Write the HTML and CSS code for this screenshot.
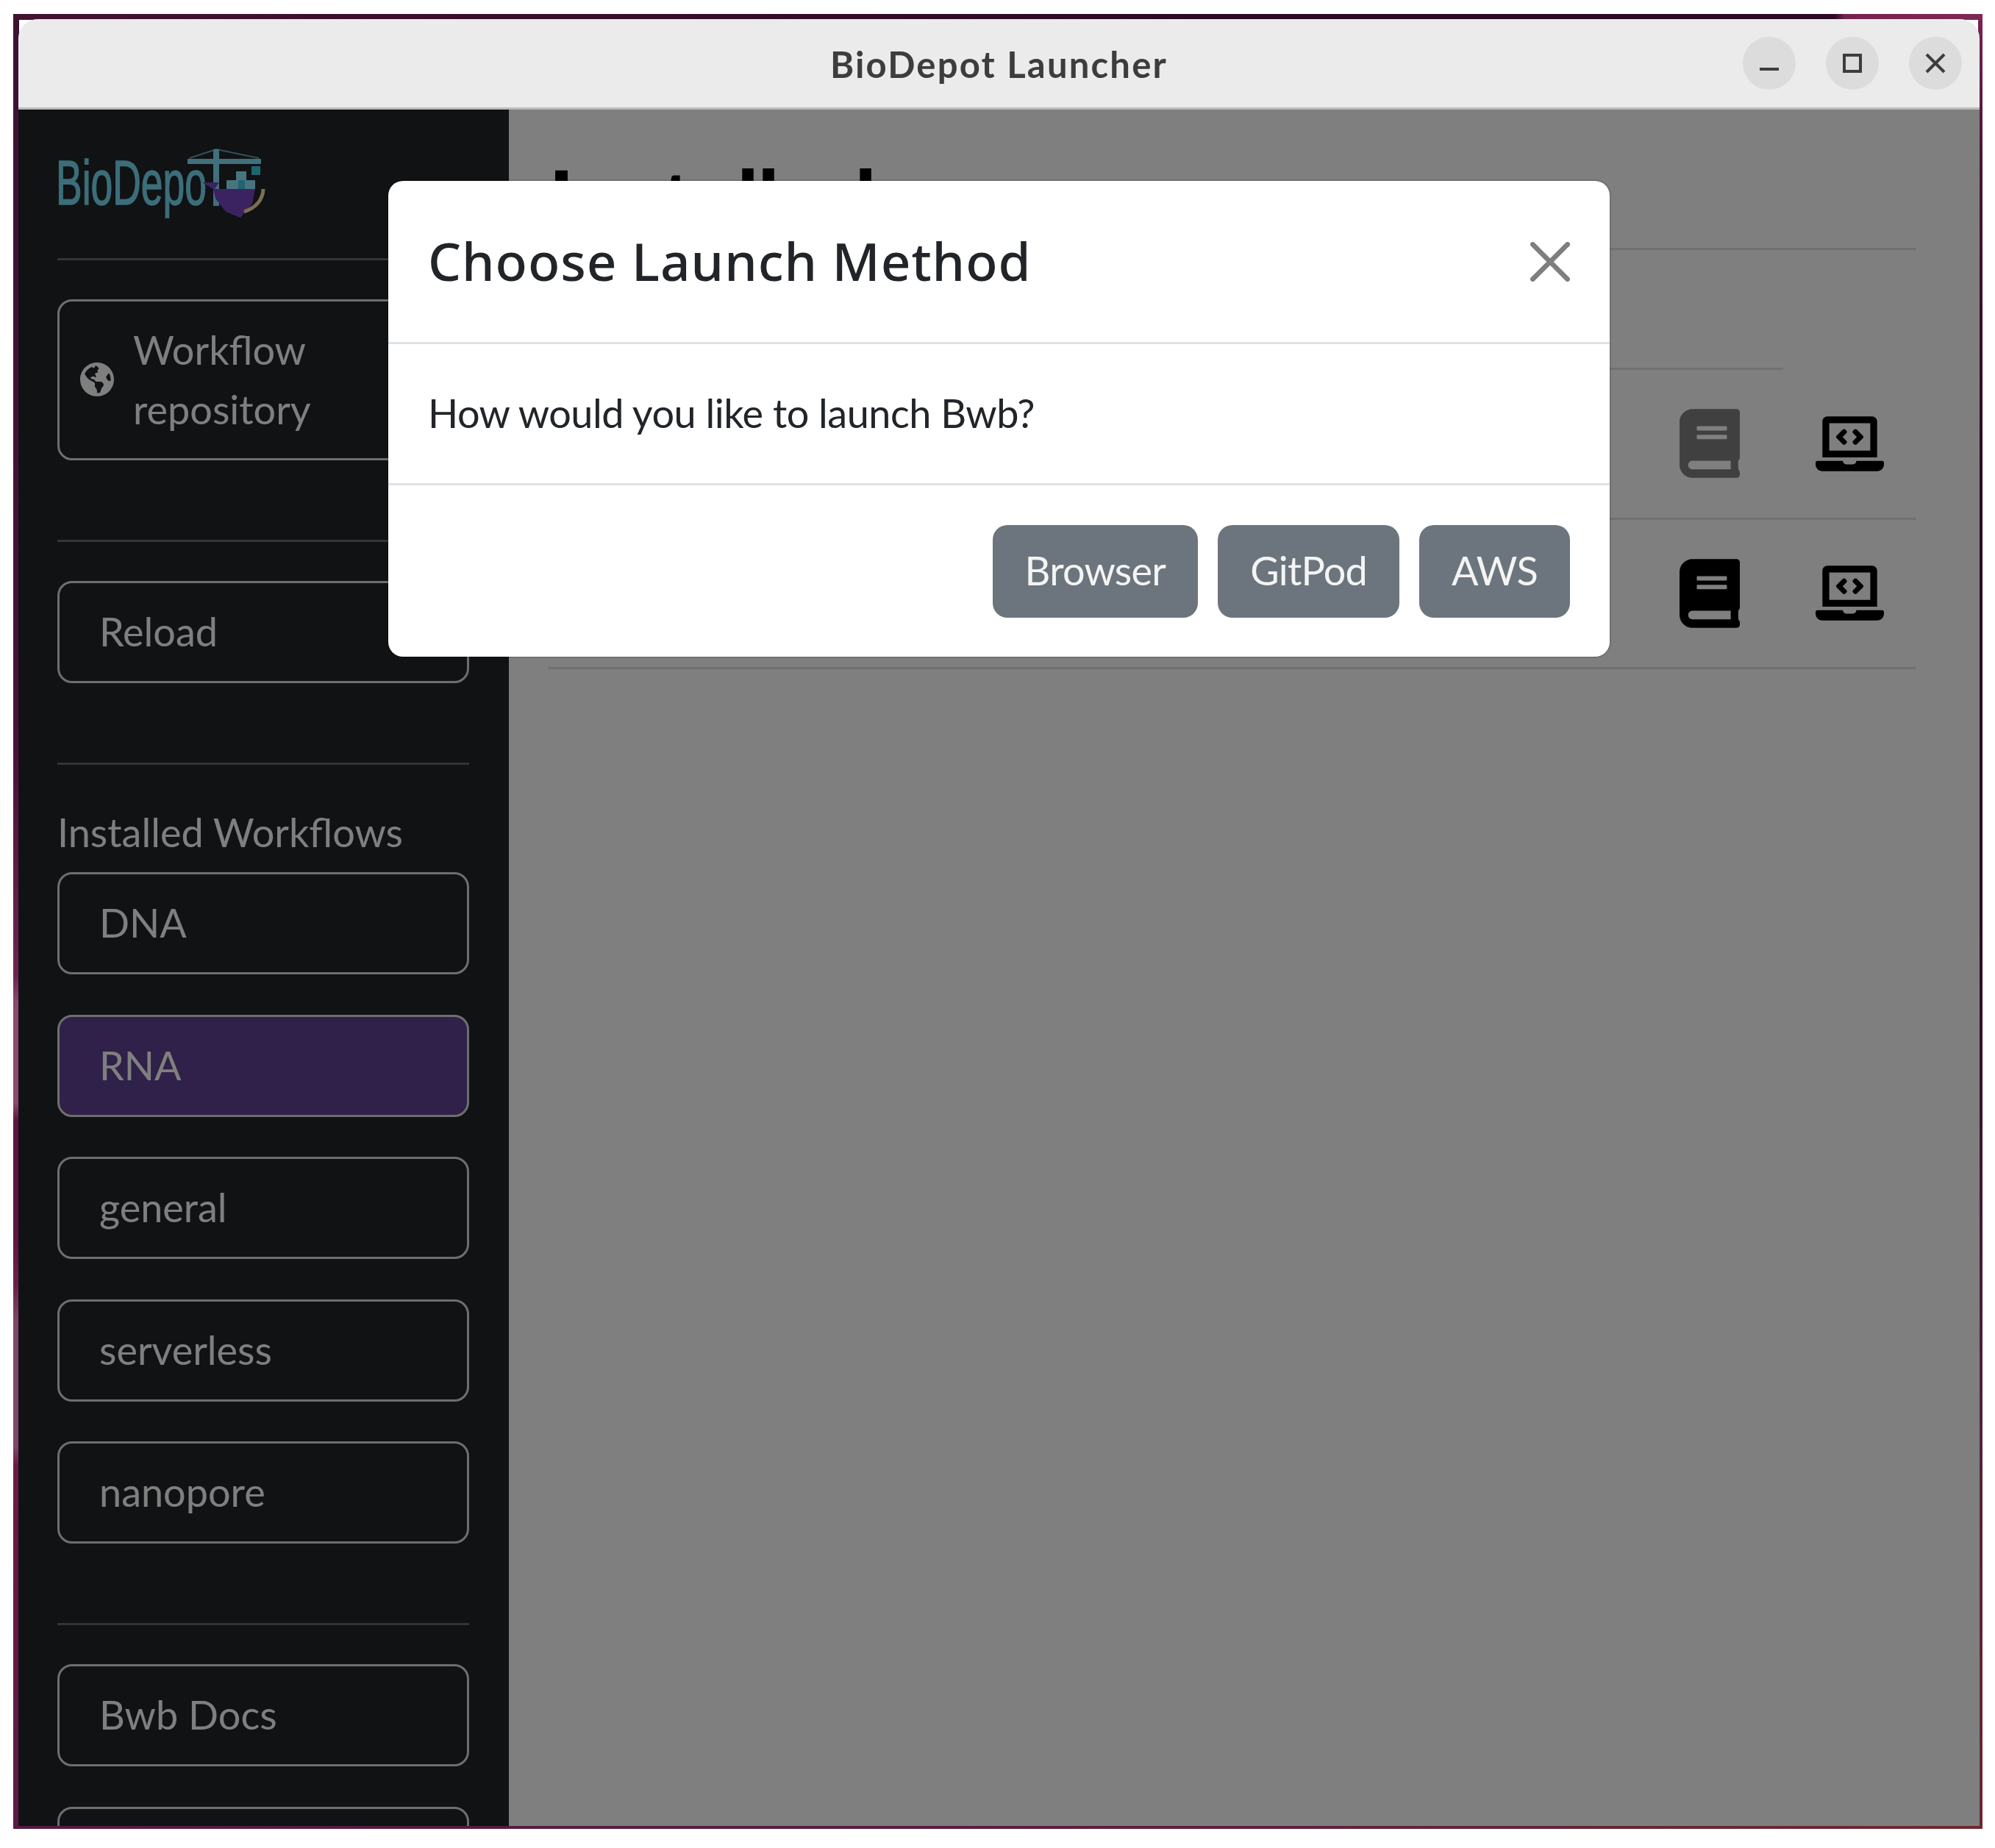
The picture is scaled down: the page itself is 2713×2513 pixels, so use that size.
FILE: index.html
```html
<!DOCTYPE html>
<html lang="en">
<head>
<meta charset="utf-8">
<title>BioDepot Launcher</title>
<link rel="stylesheet" href="styles.css">
</head>
<body>
<div class="frame">
  <div class="window">
    <header class="titlebar">
      <span></span>
      <div class="title">BioDepot Launcher</div>
      <div class="controls">
        <div class="ctl"><svg viewBox="0 0 26 26" class="ctl-icon"><path d="M0 21h26" /></svg></div>
        <div class="ctl"><svg viewBox="0 0 26 26" class="ctl-icon"><rect x="2" y="2" width="22" height="22"/></svg></div>
        <div class="ctl"><svg viewBox="0 0 26 26" class="ctl-icon"><path d="M1 1l24 24M25 1L1 25"/></svg></div>
      </div>
    </header>
    <main class="main">
      <aside class="sidebar">
        <svg class="logo" viewBox="0 0 560 202">
          <path class="stay" d="M216 54L180 66M216 54L274 66"/>
          <text class="logo-text" x="-2" y="129" textLength="205" lengthAdjust="spacingAndGlyphs">BioDepo</text>
          <rect class="teal" x="177" y="67" width="100" height="7"/>
          <rect class="teal" x="212" y="54" width="8" height="77"/>
          <rect class="cyan" x="264" y="77" width="12" height="12"/>
          <rect class="teal-l" x="230" y="96" width="39" height="12"/>
          <rect class="teal-l" x="243" y="84" width="14" height="12"/>
          <rect class="cyan" x="246" y="96" width="9" height="12"/>
          <polygon class="hull" points="197,99 220,99 214,108 269,108 265,128 249,147 229,139 215,121 212,108"/>
          <path class="arc" d="M280 108Q279 130 254 139"/>
        </svg>
        <hr class="rule rule-first">
        <div class="nav nav-tall">
          <svg class="globe" viewBox="0 0 496 512"><path d="M248 8C111.03 8 0 119.03 0 256s111.03 248 248 248 248-111.03 248-248S384.97 8 248 8zm82.29 357.6c-3.9 3.88-7.99 7.95-11.31 11.28-2.99 3-5.1 6.7-6.17 10.71-1.51 5.66-2.73 11.38-4.77 16.87l-17.39 46.85c-13.76 3-28 4.69-42.65 4.69v-27.38c1.69-12.62-7.64-36.26-22.63-51.25-6-6-9.37-14.14-9.37-22.63v-32.01c0-11.64-6.27-22.34-16.46-27.97-14.37-7.95-34.81-19.06-48.81-26.11-11.48-5.78-22.1-13.14-31.65-21.75l-.8-.72a114.792 114.792 0 0 1-18.06-20.74c-9.38-13.77-24.66-36.42-34.59-51.14 20.47-45.5 57.36-82.04 103.2-101.89l24.01 12.01C203.48 89.74 216 82.01 216 70.11v-11.3c7.99-1.29 16.12-2.11 24.39-2.42l28.3 28.3c6.25 6.25 6.25 16.38 0 22.63L264 112l-10.34 10.34c-3.12 3.12-3.12 8.19 0 11.31l4.69 4.69c3.12 3.12 3.12 8.19 0 11.31l-8 8a8.008 8.008 0 0 1-5.66 2.34h-8.99c-2.08 0-4.08.81-5.58 2.27l-9.92 9.65a8.008 8.008 0 0 0-1.58 9.31l15.59 31.19c2.66 5.32-1.21 11.58-7.15 11.58h-5.64c-1.93 0-3.79-.7-5.24-1.96l-9.28-8.06a16.017 16.017 0 0 0-15.55-3.1l-31.17 10.39a11.95 11.95 0 0 0-8.17 11.34c0 4.53 2.56 8.66 6.61 10.69l11.08 5.54c9.41 4.71 19.79 7.16 30.31 7.16s22.59 27.29 32 32h66.75c8.49 0 16.62 3.37 22.63 9.37l13.69 13.69a30.503 30.503 0 0 1 8.93 21.57 46.536 46.536 0 0 1-13.72 32.98zM417 274.25c-5.79-1.45-10.84-5-14.15-9.97l-17.98-26.97a23.97 23.97 0 0 1 0-26.62l19.59-29.38c2.32-3.47 5.5-6.29 9.24-8.15l12.98-6.49C440.2 193.59 448 223.87 448 256c0 8.67-.74 17.16-1.82 25.54L417 274.25z"/></svg>
          <span>Workflow repository</span>
        </div>
        <hr class="rule">
        <div class="nav">Reload</div>
        <hr class="rule">
        <div class="section-label">Installed Workflows</div>
        <div class="nav-list">
          <div class="nav">DNA</div>
          <div class="nav nav-active">RNA</div>
          <div class="nav">general</div>
          <div class="nav">serverless</div>
          <div class="nav">nanopore</div>
        </div>
        <hr class="rule">
        <div class="nav-list">
          <div class="nav">Bwb Docs</div>
          <div class="nav"></div>
        </div>
      </aside>
      <section class="content">
        <h1 class="heading">Installed</h1>
        <hr class="content-rule">
        <hr class="tab-rule">
        <div class="row">
          <svg class="book book-dim" viewBox="0 0 448 512"><path d="M448 360V24c0-13.3-10.7-24-24-24H96C43 0 0 43 0 96v320c0 53 43 96 96 96h328c13.3 0 24-10.7 24-24v-16c0-7.5-3.5-14.3-8.9-18.7-4.2-15.4-4.2-59.3 0-74.7 5.4-4.3 8.9-11.1 8.9-18.6zM128 134c0-3.3 2.7-6 6-6h212c3.3 0 6 2.7 6 6v20c0 3.3-2.7 6-6 6H134c-3.3 0-6-2.7-6-6v-20zm0 64c0-3.3 2.7-6 6-6h212c3.3 0 6 2.7 6 6v20c0 3.3-2.7 6-6 6H134c-3.3 0-6-2.7-6-6v-20zm253.4 250H96c-17.7 0-32-14.3-32-32 0-17.6 14.4-32 32-32h285.4c-1.9 17.1-1.9 46.9 0 64z"/></svg>
          <svg class="laptop" viewBox="0 0 640 512"><path d="M255.03 261.65c6.25 6.25 16.38 6.25 22.63 0l11.31-11.31c6.25-6.25 6.25-16.38 0-22.63L253.25 192l35.71-35.72c6.25-6.25 6.25-16.38 0-22.63l-11.31-11.31c-6.25-6.25-16.38-6.25-22.63 0l-58.34 58.34c-6.25 6.25-6.25 16.38 0 22.63l58.35 58.34zm96.01-11.3l11.31 11.31c6.25 6.25 16.38 6.25 22.63 0l58.34-58.34c6.25-6.25 6.25-16.38 0-22.63l-58.34-58.34c-6.25-6.25-16.38-6.25-22.63 0l-11.31 11.31c-6.25 6.25-6.25 16.38 0 22.63L386.75 192l-35.71 35.72c-6.25 6.25-6.25 16.38 0 22.63zM624 416H381.54c-.74 19.81-14.71 32-32.74 32H288c-18.69 0-33.02-17.47-32.77-32H16c-8.8 0-16 7.2-16 16v16c0 35.2 28.8 64 64 64h512c35.2 0 64-28.8 64-64v-16c0-8.8-7.2-16-16-16zM576 48c0-26.4-21.6-48-48-48H112C85.6 0 64 21.6 64 48v336h512V48zm-64 272H128V64h384v256z"/></svg>
        </div>
        <div class="row">
          <svg class="book" viewBox="0 0 448 512"><path d="M448 360V24c0-13.3-10.7-24-24-24H96C43 0 0 43 0 96v320c0 53 43 96 96 96h328c13.3 0 24-10.7 24-24v-16c0-7.5-3.5-14.3-8.9-18.7-4.2-15.4-4.2-59.3 0-74.7 5.4-4.3 8.9-11.1 8.9-18.6zM128 134c0-3.3 2.7-6 6-6h212c3.3 0 6 2.7 6 6v20c0 3.3-2.7 6-6 6H134c-3.3 0-6-2.7-6-6v-20zm0 64c0-3.3 2.7-6 6-6h212c3.3 0 6 2.7 6 6v20c0 3.3-2.7 6-6 6H134c-3.3 0-6-2.7-6-6v-20zm253.4 250H96c-17.7 0-32-14.3-32-32 0-17.6 14.4-32 32-32h285.4c-1.9 17.1-1.9 46.9 0 64z"/></svg>
          <svg class="laptop" viewBox="0 0 640 512"><path d="M255.03 261.65c6.25 6.25 16.38 6.25 22.63 0l11.31-11.31c6.25-6.25 6.25-16.38 0-22.63L253.25 192l35.71-35.72c6.25-6.25 6.25-16.38 0-22.63l-11.31-11.31c-6.25-6.25-16.38-6.25-22.63 0l-58.34 58.34c-6.25 6.25-6.25 16.38 0 22.63l58.35 58.34zm96.01-11.3l11.31 11.31c6.25 6.25 16.38 6.25 22.63 0l58.34-58.34c6.25-6.25 6.25-16.38 0-22.63l-58.34-58.34c-6.25-6.25-16.38-6.25-22.63 0l-11.31 11.31c-6.25 6.25-6.25 16.38 0 22.63L386.75 192l-35.71 35.72c-6.25 6.25-6.25 16.38 0 22.63zM624 416H381.54c-.74 19.81-14.71 32-32.74 32H288c-18.69 0-33.02-17.47-32.77-32H16c-8.8 0-16 7.2-16 16v16c0 35.2 28.8 64 64 64h512c35.2 0 64-28.8 64-64v-16c0-8.8-7.2-16-16-16zM576 48c0-26.4-21.6-48-48-48H112C85.6 0 64 21.6 64 48v336h512V48zm-64 272H128V64h384v256z"/></svg>
        </div>
      </section>
      <div class="backdrop"></div>
      <div class="modal">
        <div class="modal-header">
          <div class="modal-title">Choose Launch Method</div>
          <svg class="modal-close" viewBox="0 0 16 16"><path d="M.293.293a1 1 0 011.414 0L8 6.586 14.293.293a1 1 0 111.414 1.414L9.414 8l6.293 6.293a1 1 0 01-1.414 1.414L8 9.414l-6.293 6.293a1 1 0 01-1.414-1.414L6.586 8 .293 1.707a1 1 0 010-1.414z"/></svg>
        </div>
        <div class="modal-body">How would you like to launch Bwb?</div>
        <div class="modal-footer">
          <div class="btn">Browser</div>
          <div class="btn">GitPod</div>
          <div class="btn">AWS</div>
        </div>
      </div>
    </main>
  </div>
</div>
</body>
</html>
```
FILE: styles.css
```css
* { box-sizing: border-box; }
html, body { margin: 0; padding: 0; background: #fff; }
body { font-family: "Lato", "Noto Sans", sans-serif; }

.frame {
  width: 2678px;
  height: 2468px;
  margin: 19px 0 0 18px;
  padding: 7px 4px 4px 7px;
  filter: blur(0.7px);
  background-repeat: no-repeat;
  background-image:
    linear-gradient(90deg, #43122f 0%, #2c0a22 60%, #2c0a22 92.5%, #742350 93%, #7c2a55 100%),
    linear-gradient(90deg, #541a44 0%, #5a1c40 50%, #6e2a30 100%),
    linear-gradient(180deg, #3d1233 0%, #4a1038 40%, #6b2450 53%, #8a4a70 54.5%, #8a4a70 60%, #5a1540 61%, #5a1540 67%, #6a2048 70%, #80456a 72%, #80456a 79%, #6a1a40 80%, #5a1a48 100%),
    linear-gradient(180deg, #7a2350 0%, #4a1434 8%, #2c0a1f 25%, #2c0a1f 50%, #50203a 75%, #70252f 100%);
  background-size: 100% 8px, 100% 5px, 8px 100%, 6px 100%;
  background-position: 0 0, 0 100%, 0 0, 100% 0;
}

.window {
  width: 100%;
  height: 100%;
  display: flex;
  flex-direction: column;
  overflow: hidden;
  border-radius: 26px 26px 0 0;
}

.titlebar {
  flex: none;
  height: 123px;
  display: grid;
  grid-template-columns: 1fr auto 1fr;
  align-items: center;
  background: #ebebeb;
  border-bottom: 3px solid #bcbcbc;
}
.title {
  font-size: 49px;
  font-weight: 700;
  color: #3d3d3d;
  letter-spacing: 2.2px;
  padding-top: 2px;
}
.controls {
  display: flex;
  justify-content: flex-end;
  gap: 41px;
  padding-right: 24px;
}
.ctl {
  width: 72px;
  height: 72px;
  border-radius: 50%;
  background: #dcdcdc;
  display: flex;
  align-items: center;
  justify-content: center;
}
.ctl-icon {
  width: 26px;
  height: 26px;
  fill: none;
  stroke: #3d3d3d;
  stroke-width: 4;
  overflow: visible;
}

.main {
  flex: 1;
  min-height: 0;
  display: flex;
  position: relative;
  overflow: hidden;
}

.sidebar {
  flex: none;
  width: 667px;
  padding: 0 54px 0 53px;
  background: #212529;
  color: #fff;
  overflow: hidden;
}
.logo { display: block; width: 560px; height: 202px; overflow: visible; }
.logo-text {
  font-family: "Liberation Sans", sans-serif;
  font-size: 85px;
  fill: #78dcf4;
  stroke: #78dcf4;
  stroke-width: 1.5;
}
.teal { fill: #80e0f8; }
.teal-l { fill: #90e8ff; }
.cyan { fill: #40c8e0; }
.hull { fill: #7446c0; }
.arc { fill: none; stroke: #f8dca8; stroke-width: 5; }
.stay { fill: none; stroke: #60a0b8; stroke-width: 2; }

.rule {
  height: 3px;
  margin: 108px 0 53px;
  border: 0;
  background: #66686c;
}
.rule-first { margin-top: 0; }

.nav {
  height: 139px;
  padding: 0 54px 2px;
  display: flex;
  align-items: center;
  gap: 28px;
  font-size: 54px;
  line-height: 81px;
  color: #fff;
  border: 3px solid #dcdcdc;
  border-radius: 20px;
}
.nav-tall { height: 219px; padding: 0 28px 2px; gap: 26px; }
.nav-active { background: #5e4292; }
.globe { flex: none; width: 46px; height: 48px; fill: #fff; }
.nav-list { display: flex; flex-direction: column; gap: 54.5px; }
.section-label {
  font-size: 54px;
  line-height: 81px;
  margin: -2px 0 14px;
}

.content {
  flex: 1;
  padding: 0 87px 0 53px;
  background: #fff;
}
.heading {
  margin: 0;
  height: 188px;
  padding-top: 50px;
  font-size: 125px;
  font-weight: 700;
  line-height: 150px;
  letter-spacing: -3px;
  color: #000;
  overflow: hidden;
}
.content-rule, .tab-rule {
  height: 3px;
  border: 0;
  margin: 0;
  background: #dee2e6;
}
.tab-rule { width: 1680px; margin-top: 160px; }
.row {
  height: 203.5px;
  display: flex;
  align-items: center;
  justify-content: flex-end;
  gap: 103px;
  padding-right: 43px;
  border-bottom: 3px solid #dee2e6;
}
.book { width: 82px; height: 94px; fill: #000; }
.book-dim { fill: #808080; }
.laptop { width: 93px; height: 75px; fill: #000; }

.backdrop {
  position: absolute;
  inset: 0;
  background: rgba(0, 0, 0, 0.5);
}

.modal {
  position: absolute;
  left: 501px;
  top: 95px;
  width: 1665px;
  height: 651px;
  display: flex;
  flex-direction: column;
  background: #fff;
  background-clip: padding-box;
  border: 2px solid rgba(0, 0, 0, 0.12);
  border-radius: 22px;
}
.modal-header {
  height: 222px;
  flex: none;
  padding: 0 54px;
  display: flex;
  align-items: center;
  justify-content: space-between;
  border-bottom: 3px solid #dee2e6;
}
.modal-title {
  font-family: "Noto Sans", sans-serif;
  font-size: 71px;
  font-weight: 500;
  letter-spacing: 1px;
  color: #212529;
  padding-bottom: 2px;
}
.modal-close { width: 54px; height: 54px; fill: #000; opacity: 0.5; }
.modal-body {
  height: 192px;
  flex: none;
  padding: 0 54px 2px;
  display: flex;
  align-items: center;
  font-size: 54px;
  letter-spacing: -0.5px;
  color: #212529;
  border-bottom: 3px solid #dee2e6;
}
.modal-footer {
  flex: 1;
  padding: 0 54px;
  display: flex;
  align-items: center;
  justify-content: flex-end;
  gap: 27px;
}
.btn {
  height: 126px;
  padding: 0 44px 2px;
  display: flex;
  align-items: center;
  font-size: 54px;
  letter-spacing: -0.75px;
  color: #f4f4f4;
  background: #6c757d;
  border-radius: 20px;
}
```
